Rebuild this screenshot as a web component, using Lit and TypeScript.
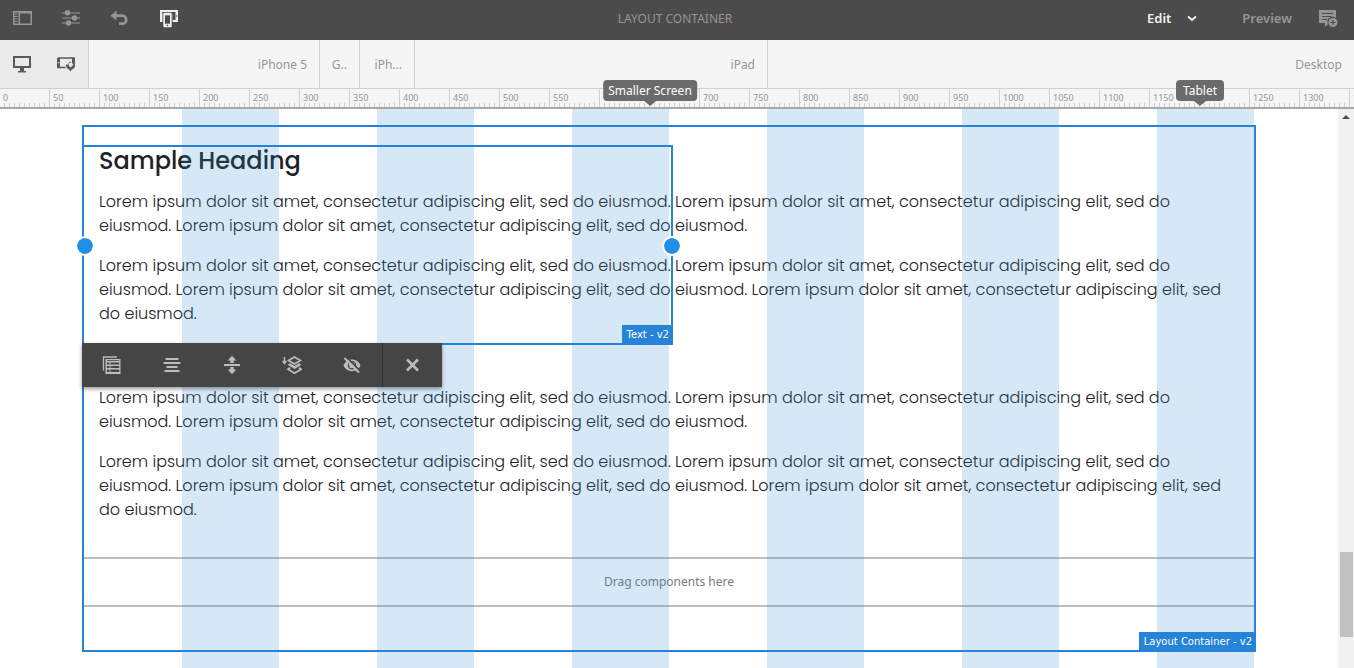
import { LitElement, html, css, svg, TemplateResult } from "lit";
import { customElement, property } from "lit/decorators.js";
import { styleMap } from "lit/directives/style-map.js";

const LOREM = "Lorem ipsum dolor sit amet, consectetur adipiscing elit, sed do eiusmod.";
const SHORT = `${LOREM} ${LOREM} ${LOREM}`;
const LONG = `${SHORT} ${LOREM}`;

const DEVICES = [
  { label: "iPhone 5", end: 320 },
  { label: "G..", end: 360 },
  { label: "iPh...", end: 415 },
  { label: "iPad", end: 768 },
];

const BREAKPOINTS = [
  { label: "Smaller Screen", at: 650 },
  { label: "Tablet", at: 1200 },
];

const icons: Record<string, TemplateResult> = {
  panel: svg`<path d="M0 2h19v14H0z M1.5 3.5v11h4v-11z M7 4.5v10h10.5v-10z" fill="currentColor" fill-rule="evenodd"/><path d="M1.5 5h3M1.5 7.5h3M1.5 10h3M1.5 12.5h3" stroke="currentColor" stroke-width="1.2"/>`,
  sliders: svg`<path d="M0 4h18M0 9h18M0 14h18" stroke="currentColor" stroke-width="1.2"/><circle cx="5.5" cy="3.8" r="2.7" fill="currentColor"/><circle cx="12.5" cy="9" r="2.7" fill="currentColor"/><circle cx="6.5" cy="14" r="2.7" fill="currentColor"/>`,
  undo: svg`<path d="M4.5 6.700h6.700a4 4 0 0 1 0 8H8" fill="none" stroke="currentColor" stroke-width="2.8"/><path d="M-.5 6.700 5.500 1.800v9.800z" fill="currentColor"/>`,
  emulator: svg`<path d="M0 1h18v12h-6V5H3v8H0z" fill="currentColor"/><path d="M2.500 3h13v8h-3V5h-10z" fill="#4b4b4b"/><circle cx="16.700" cy="7" r=".7" fill="#4b4b4b"/><path d="M2.500 3h10v15h-10z" fill="#4b4b4b"/><rect x="3.300" y="3.800" width="8.400" height="14.400" rx="1" fill="currentColor"/><path d="M5 6.300h5v8.400H5z" fill="#4b4b4b"/><circle cx="7.500" cy="16.400" r=".8" fill="#4b4b4b"/>`,
  comment: svg`<path d="M0 1h17v8.200a5 5 0 0 0-8 5.800l-3 3v-4H0z" fill="currentColor"/><path d="M3 4.500h11M3 7.500h9M3 10.500h5" stroke="#4b4b4b" stroke-width="1.200"/><circle cx="14" cy="13.500" r="4.500" fill="currentColor"/><path d="M11.500 13.500h5M14 11v5" stroke="#4b4b4b" stroke-width="1.200"/>`,
  chevron: svg`<path d="m5 7.500 4 3.500 4-3.500" fill="none" stroke="currentColor" stroke-width="2"/>`,
  desktop: svg`<path d="M0 1h18v12h-7v3h2v1.500H5V16h2v-3H0z M2 3v8h14V3z" fill="currentColor" fill-rule="evenodd"/>`,
  rotate: svg`<path d="M1 3h16v4.500M1 3v9.500h7.500" fill="none" stroke="currentColor" stroke-width="1.600"/><path d="M0 3h3v9.500H0zM15 3h3v4h-3z" fill="currentColor"/><circle cx="1.500" cy="7.700" r=".8" fill="#eaeaea"/><path d="M9 9.500h3.500l-.8 1.200 1.800 1.800 3-3 1.500-.5c.6 3.200-1 5-3.200 5.500L13.500 16.500 12 14.500C10 13.800 8.800 12 9 9.500z" fill="currentColor"/><path d="M11.500 8.500a3 3 0 0 1 2.300-1.500M15 7l2.800.3-.8 2.500z" fill="currentColor" stroke="currentColor" stroke-width="1"/>`,
  properties: svg`<path d="M.5 14.500V1H14" fill="none" stroke="currentColor" stroke-width="1.300"/><path d="M2.500 3h15v15h-15z M4 6.500v2h2.500v-2z M7.500 6.500v2h8.700v-2z M4 10v2h2.500v-2z M7.500 10v2h8.700v-2z M4 13.500V16h2.500v-2.500z M7.500 13.500V16h8.700v-2.500z M4 4.300v.8h12.200v-.8z" fill="currentColor" fill-rule="evenodd"/>`,
  align: svg`<path d="M2.500 3h13M.5 7h17M3.500 11h11M1.500 15h15" stroke="currentColor" stroke-width="2"/>`,
  spread: svg`<path d="M1 9h16" stroke="currentColor" stroke-width="2"/><path d="M9-.3l4.300 4.800h-2.600V7H7.300V4.500H4.700zM9 18.300l4.300-4.800h-2.600V11H7.300v2.500H4.700z" fill="currentColor"/>`,
  layers: svg`<path d="M1.500 1v6M-.3 5 1.500 7.500 3.300 5" fill="none" stroke="currentColor" stroke-width="1.400"/><path d="m5.500 4.500 6-3.500 6 3.500-6 3.500z" fill="none" stroke="currentColor" stroke-width="1.700"/><path d="m4.500 8.800 7 4.200 7-4.200-2.500-1.500-4.500 2.700L7 7.300z" fill="currentColor"/><path d="m7 11.700-2 1.500 6.500 4 6.500-4-2-1.500" fill="none" stroke="currentColor" stroke-width="1.800"/>`,
  hidden: svg`<path d="M.5 9.500C3.500 1.500 14.500 1.500 17.500 9.500 14.500 17 3.500 17 .5 9.500z" fill="currentColor"/><circle cx="9" cy="9.300" r="3.600" fill="none" stroke="#454545" stroke-width="1.300"/><path d="m3 .8 14.800 14.800" stroke="#454545" stroke-width="1.600"/><path d="m1.500 2 14.500 14.500" stroke="currentColor" stroke-width="2"/>`,
  close: svg`<path d="m3 3.500 11 11m0-11-11 11" stroke="currentColor" stroke-width="2.600"/>`,
};

const icon = (name: string) =>
  html`<svg width="20" height="20" viewBox="-1 -1 20 20" aria-hidden="true">${icons[name]}</svg>`;

const base = css`
  :host, * { box-sizing: border-box; }
  button {
    font: inherit;
    color: inherit;
    background: none;
    border: 0;
    padding: 0;
    margin: 0;
    display: flex;
    align-items: center;
    justify-content: center;
    cursor: pointer;
  }
  svg { display: block; }
`;

@customElement("editor-header")
export class EditorHeader extends LitElement {
  static styles = [base, css`
    :host {
      display: grid;
      grid-template-columns: 1fr auto 1fr;
      align-items: center;
      height: 40px;
      padding: 0 16px 4px 12px;
      background: #4b4b4b;
      color: #969696;
      font-size: 13px;
    }
    .tools { display: flex; gap: 29px; }
    .active { color: #f0f0f0; }
    .title { font-size: 12px; }
    .modes { display: flex; justify-content: flex-end; align-items: center; font-weight: 600; }
    .mode { color: #f0f0f0; gap: 11px; margin-right: 40px; }
    .preview { margin-right: 26px; }
  `];
  render() {
    return html`
      <div class="tools">
        <button aria-label="Toggle side panel">${icon("panel")}</button>
        <button aria-label="Page information">${icon("sliders")}</button>
        <button aria-label="Undo">${icon("undo")}</button>
        <button class="active" aria-label="Emulator">${icon("emulator")}</button>
      </div>
      <button class="title">LAYOUT CONTAINER</button>
      <div class="modes">
        <button class="mode">Edit ${icon("chevron")}</button>
        <button class="preview">Preview</button>
        <button aria-label="Annotate">${icon("comment")}</button>
      </div>`;
  }
}

@customElement("device-bar")
export class DeviceBar extends LitElement {
  static styles = [base, css`
    :host {
      display: block;
      background: #f5f5f5;
      color: #969696;
      font-size: 12px;
    }
    .bar { display: flex; height: 48px; }
    .emulate {
      display: flex;
      align-items: center;
      gap: 24px;
      flex: 0 0 89px;
      padding-left: 12px;
      background: #eaeaea;
      border-right: 1px solid #d0d0d0;
      color: #5a5a5a;
    }
    .device {
      flex: none;
      justify-content: flex-end;
      padding: 0 12px 0 0;
      border-right: 1px solid #d0d0d0;
    }
    .wide { flex: 1; border-right: 0; }
    .ruler {
      position: relative;
      display: flex;
      height: 21px;
      border-top: 1px solid #d0d0d0;
      border-bottom: 2px solid #a8a8a8;
    }
    .scale { display: flex; flex: 1; min-width: 0; overflow: hidden; }
    .mark {
      flex: 0 0 50px;
      padding: 3px 0 0 3px;
      border-right: 1px solid #d0d0d0;
      font-size: 9px;
      line-height: 12px;
      background: repeating-linear-gradient(to right, transparent 0 4px, #d0d0d0 4px 5px) bottom / 100% 4px no-repeat;
    }
    .tip {
      position: absolute;
      bottom: 6px;
      transform: translateX(-50%);
      padding: 0 5px;
      min-width: 48px;
      border-radius: 4px;
      background: #6b6b6b;
      color: #fff;
      line-height: 21px;
      white-space: nowrap;
    }
    .tip::after {
      content: "";
      position: absolute;
      top: 100%;
      left: 50%;
      margin-left: -6px;
      border: 6px solid transparent;
      border-top: 5px solid #6b6b6b;
      border-bottom: 0;
    }
  `];

  private onResize = () => this.requestUpdate();
  connectedCallback() {
    super.connectedCallback();
    window.addEventListener("resize", this.onResize);
  }
  disconnectedCallback() {
    window.removeEventListener("resize", this.onResize);
    super.disconnectedCallback();
  }

  // A mark whose number would sit under a breakpoint flag carries ticks only.
  private markLabel(value: number) {
    const covered = BREAKPOINTS.some((b) => {
      const half = b.label.length * 3 + 6;
      return value + 20 > b.at - half && value < b.at + half;
    });
    return covered ? "" : value;
  }

  render() {
    const starts = [89, ...DEVICES.map((d) => d.end)];
    const marks = Math.ceil(window.innerWidth / 50);
    return html`
      <div class="bar">
        <div class="emulate">
          <button aria-label="Desktop view">${icon("desktop")}</button>
          <button aria-label="Rotate device">${icon("rotate")}</button>
        </div>
        ${DEVICES.map((d, i) => html`
          <button class="device" style=${styleMap({ width: `${d.end - starts[i]}px` })}>${d.label}</button>`)}
        <button class="device wide">Desktop</button>
      </div>
      <div class="ruler">
        <div class="scale">
          ${Array.from({ length: marks }, (_, i) => html`<div class="mark">${this.markLabel(i * 50)}</div>`)}
        </div>
        ${BREAKPOINTS.map((b) => html`
          <button class="tip" style=${styleMap({ left: `${b.at}px` })}>${b.label}</button>`)}
      </div>`;
  }
}

@customElement("text-toolbar")
export class TextToolbar extends LitElement {
  static styles = [base, css`
    :host {
      display: flex;
      height: 44px;
      background: #454545;
      color: #bcbcbc;
      box-shadow: 0 2px 4px rgba(0, 0, 0, 0.4);
    }
    button { width: 60px; }
    .close { border-left: 1px solid #323232; }
  `];
  render() {
    return html`
      <button aria-label="Properties">${icon("properties")}</button>
      <button aria-label="Align">${icon("align")}</button>
      <button aria-label="Float to new line">${icon("spread")}</button>
      <button aria-label="Parent">${icon("layers")}</button>
      <button aria-label="Hide component">${icon("hidden")}</button>
      <button class="close" aria-label="Close">${icon("close")}</button>`;
  }
}

@customElement("page-canvas")
export class PageCanvas extends LitElement {
  @property({ type: Number }) columns = 12;

  static styles = [base, css`
    :host {
      display: flex;
      min-height: 0;
      overflow: hidden;
      background: #fff;
      color: #202124;
    }
    .page { position: relative; flex: 1; padding: 18px 0; overflow: hidden; }
    .container {
      position: relative;
      max-width: 1170px;
      margin: 0 auto;
      padding-bottom: 43px;
      outline: 2px solid #2583d8;
    }
    .text {
      position: relative;
      padding: 20px 15px 0;
      font-family: Poppins, Inter, sans-serif;
      font-size: 16px;
      font-weight: 300;
      line-height: 24px;
    }
    .first { padding-bottom: 17px; }
    .second { padding: 43px 15px 35px; }
    h2 { margin: 0 0 15px; font-size: 24px; font-weight: 500; line-height: 28px; }
    p { margin: 0 0 16px; }
    p:last-of-type { margin: 0; }
    .grid {
      position: absolute;
      inset: 0;
      z-index: 1;
      display: grid;
      max-width: 1170px;
      margin: 0 auto;
      grid-auto-flow: column;
      grid-auto-columns: 1fr;
      pointer-events: none;
    }
    .col:nth-child(even) { background: rgba(50, 140, 210, 0.2); }
    .selection {
      position: absolute;
      z-index: 2;
      top: 18px;
      bottom: -2px;
      left: -2px;
      width: calc(50% + 6px);
      border: 2px solid #2583d8;
    }
    .badge {
      position: absolute;
      z-index: 2;
      right: -2px;
      bottom: -2px;
      padding: 0 4px 0 5px;
      background: #2583d8;
      color: #fff;
      font-family: "DejaVu Sans", sans-serif;
      font-size: 10px;
      font-weight: 400;
      line-height: 20px;
    }
    .handle {
      position: absolute;
      top: 50%;
      width: 20px;
      height: 20px;
      margin-top: -9px;
      border: 2px solid #fff;
      border-radius: 50%;
      background: #1f8fe8;
      background-clip: padding-box;
    }
    .start { left: -9px; }
    .end { right: -11px; }
    text-toolbar { position: absolute; z-index: 3; top: 216px; left: -2px; }
    .drop {
      border: solid rgba(125, 125, 125, 0.5);
      border-width: 2px 0;
      color: #7a7a7a;
      font-size: 12px;
      line-height: 46px;
      text-align: center;
    }
    .scrollbar {
      flex: 0 0 16px;
      display: flex;
      flex-direction: column;
      align-items: center;
      background: #f1f1f1;
      padding: 6px 0 31px;
    }
    .up { border: 4px solid transparent; border-top: 0; border-bottom: 4px solid #505050; }
    .thumb { width: 13px; height: 85px; margin-top: auto; background: #c1c1c1; }
  `];
  render() {
    return html`
      <main class="page">
        <section class="container">
          <div class="text first">
            <h2>Sample Heading</h2>
            <p>${SHORT}</p>
            <p>${LONG}</p>
            <div class="selection">
              <span class="handle start"></span>
              <span class="handle end"></span>
              <span class="badge">Text - v2</span>
            </div>
          </div>
          <div class="text second">
            <p>${SHORT}</p>
            <p>${LONG}</p>
          </div>
          <div class="drop">Drag components here</div>
          <span class="badge">Layout Container - v2</span>
          <text-toolbar></text-toolbar>
        </section>
        <div class="grid">
          ${Array.from({ length: this.columns }, () => html`<div class="col"></div>`)}
        </div>
      </main>
      <div class="scrollbar"><div class="up"></div><div class="thumb"></div></div>`;
  }
}

@customElement("app-root")
export class AppRoot extends LitElement {
  static styles = css`
    :host {
      display: flex;
      flex-direction: column;
      height: 100vh;
      font-family: "Noto Sans", "Open Sans", sans-serif;
    }
    page-canvas { flex: 1; }
  `;
  render() {
    return html`
      <editor-header></editor-header>
      <device-bar></device-bar>
      <page-canvas></page-canvas>`;
  }
}
